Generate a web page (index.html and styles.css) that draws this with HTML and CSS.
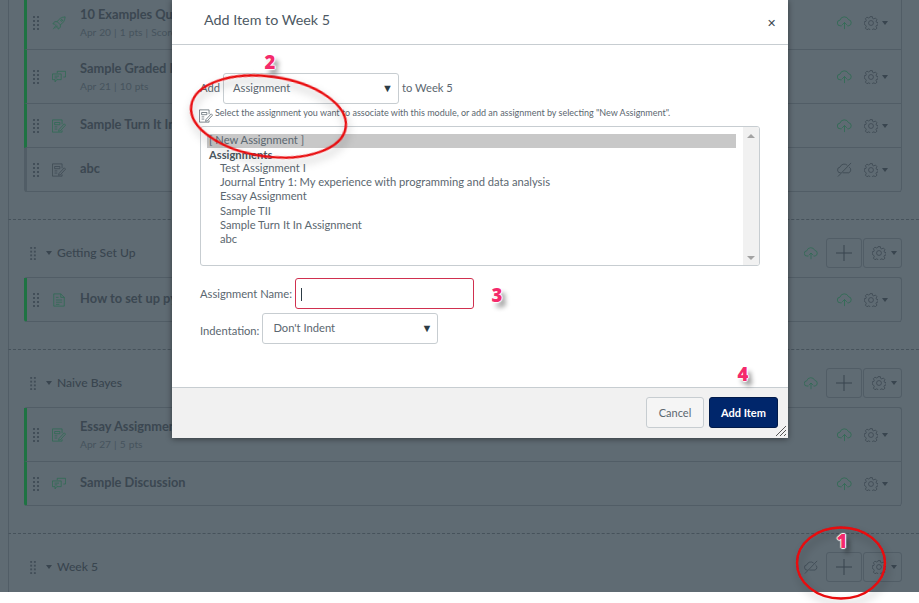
FILE: index.html
```html
<!DOCTYPE html>
<html lang="en">
<head>
<meta charset="utf-8">
<title>Add Item to Week 5</title>
<link rel="stylesheet" href="styles.css">
</head>
<body>
<svg class="defs" width="0" height="0" aria-hidden="true">
  <symbol id="i-handle" viewBox="0 0 6 14"><g fill="currentColor"><rect x="0" y="0" width="2" height="2"/><rect x="4" y="0" width="2" height="2"/><rect x="0" y="4" width="2" height="2"/><rect x="4" y="4" width="2" height="2"/><rect x="0" y="8" width="2" height="2"/><rect x="4" y="8" width="2" height="2"/><rect x="0" y="12" width="2" height="2"/><rect x="4" y="12" width="2" height="2"/></g></symbol>
  <symbol id="i-rocket" viewBox="0 0 16 16"><g fill="none" stroke="currentColor" stroke-width=".8"><path d="M15 1c-4 .3-7 2-9 5.500l3.500 3.500C13 8 14.700 5 15 1z"/><path d="M6 6.500H3L1 9l3 .5M9.500 10v3L7 15l-.5-3"/><path d="M5 10l-3.500 5M6 11l-2 3"/><circle cx="11" cy="5" r="1"/></g></symbol>
  <symbol id="i-discuss" viewBox="0 0 16 16"><g fill="none" stroke="currentColor" stroke-width=".8"><path d="M6 3.500V1.500h9.500V8H13"/><path d="M.5 4.500h10V11H5.500L3.500 13.500V11H.5z"/><path d="M3 7h5M3 9h3"/></g></symbol>
  <symbol id="i-assign" viewBox="0 0 16 16"><g fill="none" stroke="currentColor" stroke-width=".8"><path d="M11.500 6V1H.5v14h11v-2"/><path d="M3 4h6v2.500H3zM3 9h3M3 11.500h3"/><path d="M8 12l-.5 2 2-.5 6-6.500-1.500-1.500z"/></g></symbol>
  <symbol id="i-page" viewBox="0 0 14 16"><g fill="none" stroke="currentColor" stroke-width=".8"><path d="M1 1h8l4 4v10H1z"/><path d="M9 1v4h4M3.500 5h3M3.500 8h7M3.500 10.500h7M3.500 13h4"/></g></symbol>
  <symbol id="i-cloud" viewBox="0 0 16 16"><g fill="none" stroke="currentColor" stroke-width=".8"><path d="M5 11.500H3.500a3 3 0 0 1-.3-6A4.800 4.800 0 0 1 12.300 5a3.300 3.300 0 0 1 .2 6.500H11"/><path d="M8 15V8M5.500 10.500 8 8l2.500 2.500"/></g></symbol>
  <symbol id="i-cloudoff" viewBox="0 0 16 16"><g fill="none" stroke="currentColor" stroke-width=".8"><path d="M4 11.500a3 3 0 0 1-.8-6A4.800 4.800 0 0 1 11 3.500M13 5.500a3.300 3.300 0 0 1-.5 6H6"/><path d="M1 15.500 15 1"/></g></symbol>
  <symbol id="i-gear" viewBox="0 0 16 16"><g fill="none" stroke="currentColor" stroke-width=".8"><path d="M6.700 1h2.600l.4 2 1.300.6 1.800-1 1.800 1.900-1 1.700.5 1.300 1.900.5v2.600l-1.900.5-.5 1.300 1 1.700-1.800 1.900-1.800-1-1.300.5-.4 1.500H6.700l-.4-1.500-1.300-.5-1.800 1-1.800-1.900 1-1.700-.5-1.300L0 9.600V7l1.900-.5.5-1.300-1-1.700 1.800-1.900 1.800 1 1.300-.6z" transform="translate(.2 -.3)"/><circle cx="8" cy="8" r="2.800"/></g></symbol>
  <symbol id="i-plus" viewBox="0 0 16 16"><path d="M8 0v16M0 8h16" fill="none" stroke="currentColor" stroke-width="1"/></symbol>
</svg>

<main class="page">
  <section class="module module-first">
    <ul class="items">
      <li class="item tall pub"><svg class="handle"><use href="#i-handle"/></svg><svg class="type"><use href="#i-rocket"/></svg><div class="body"><div class="name">10 Examples Quiz</div><div class="meta">Apr 20 | 1 pts | Score at least 8</div></div><svg class="cloud on"><use href="#i-cloud"/></svg><svg class="gear"><use href="#i-gear"/></svg><span class="caret"></span></li>
      <li class="item tall pub"><svg class="handle"><use href="#i-handle"/></svg><svg class="type"><use href="#i-discuss"/></svg><div class="body"><div class="name">Sample Graded Discussion</div><div class="meta">Apr 21 | 10 pts</div></div><svg class="cloud on"><use href="#i-cloud"/></svg><svg class="gear"><use href="#i-gear"/></svg><span class="caret"></span></li>
      <li class="item pub"><svg class="handle"><use href="#i-handle"/></svg><svg class="type"><use href="#i-assign"/></svg><div class="body"><div class="name">Sample Turn It In Assignment</div></div><svg class="cloud on"><use href="#i-cloud"/></svg><svg class="gear"><use href="#i-gear"/></svg><span class="caret"></span></li>
      <li class="item"><svg class="handle"><use href="#i-handle"/></svg><svg class="type plain"><use href="#i-assign"/></svg><div class="body"><div class="name">abc</div></div><svg class="cloud"><use href="#i-cloudoff"/></svg><svg class="gear"><use href="#i-gear"/></svg><span class="caret"></span></li>
    </ul>
  </section>

  <section class="module">
    <header class="mod-head"><svg class="mod-handle"><use href="#i-handle"/></svg><span class="mod-caret"></span><h2 class="mod-title">Getting Set Up</h2><svg class="mod-cloud on"><use href="#i-cloud"/></svg><span class="mod-btn add"><svg class="plus"><use href="#i-plus"/></svg></span><span class="mod-btn cog"><svg class="gear"><use href="#i-gear"/></svg><span class="caret"></span></span></header>
    <ul class="items">
      <li class="item pub"><svg class="handle"><use href="#i-handle"/></svg><svg class="type"><use href="#i-page"/></svg><div class="body"><div class="name">How to set up python</div></div><svg class="cloud on"><use href="#i-cloud"/></svg><svg class="gear"><use href="#i-gear"/></svg><span class="caret"></span></li>
    </ul>
  </section>

  <section class="module">
    <header class="mod-head"><svg class="mod-handle"><use href="#i-handle"/></svg><span class="mod-caret"></span><h2 class="mod-title">Naive Bayes</h2><svg class="mod-cloud on"><use href="#i-cloud"/></svg><span class="mod-btn add"><svg class="plus"><use href="#i-plus"/></svg></span><span class="mod-btn cog"><svg class="gear"><use href="#i-gear"/></svg><span class="caret"></span></span></header>
    <ul class="items">
      <li class="item tall pub"><svg class="handle"><use href="#i-handle"/></svg><svg class="type"><use href="#i-assign"/></svg><div class="body"><div class="name">Essay Assignment</div><div class="meta">Apr 27 | 5 pts</div></div><svg class="cloud on"><use href="#i-cloud"/></svg><svg class="gear"><use href="#i-gear"/></svg><span class="caret"></span></li>
      <li class="item pub"><svg class="handle"><use href="#i-handle"/></svg><svg class="type"><use href="#i-discuss"/></svg><div class="body"><div class="name">Sample Discussion</div></div><svg class="cloud on"><use href="#i-cloud"/></svg><svg class="gear"><use href="#i-gear"/></svg><span class="caret"></span></li>
    </ul>
  </section>

  <section class="module module-last">
    <header class="mod-head"><svg class="mod-handle"><use href="#i-handle"/></svg><span class="mod-caret"></span><h2 class="mod-title">Week 5</h2><svg class="mod-cloud"><use href="#i-cloudoff"/></svg><span class="mod-btn add"><svg class="plus"><use href="#i-plus"/></svg></span><span class="mod-btn cog"><svg class="gear"><use href="#i-gear"/></svg><span class="caret"></span></span></header>
  </section>
</main>

<div class="dialog" role="dialog">
  <header class="dlg-head"><h1 class="dlg-title">Add Item to Week 5</h1><span class="dlg-close">&#x2715;</span></header>
  <div class="dlg-body">
    <div class="add-row"><span class="lbl">Add</span><div class="select sel-type"><span>Assignment</span><i class="sel-arrow">&#9660;</i></div><span class="lbl to">to Week 5</span></div>
    <div class="help"><svg class="help-icon"><use href="#i-assign"/></svg><span class="help-text">Select the assignment you want to associate with this module, or add an assignment by selecting "New Assignment".</span></div>
    <div class="listbox">
      <div class="options">
        <div class="opt selected">[ New Assignment ]</div>
        <div class="opt group">Assignments</div>
        <div class="opt child">Test Assignment I</div>
        <div class="opt child">Journal Entry 1: My experience with programming and data analysis</div>
        <div class="opt child">Essay Assignment</div>
        <div class="opt child">Sample TII</div>
        <div class="opt child">Sample Turn It In Assignment</div>
        <div class="opt child">abc</div>
      </div>
      <div class="scrollbar"><i class="sb-up"></i><i class="sb-down"></i></div>
    </div>
    <div class="name-row"><span class="lbl">Assignment Name:</span><div class="text-input"><i class="cursor"></i></div></div>
    <div class="indent-row"><span class="lbl">Indentation:</span><div class="select sel-indent"><span>Don't Indent</span><i class="sel-arrow">&#9660;</i></div></div>
  </div>
  <footer class="dlg-foot"><span class="btn">Cancel</span><span class="btn primary">Add Item</span><svg class="grip" viewBox="0 0 12 12"><path d="M1 11 11 1M5 11 11 5M9 11l2-2" stroke="#555" fill="none"/></svg></footer>
</div>

<svg class="rings" viewBox="0 0 919 603" aria-hidden="true">
  <defs><filter id="ring-shadow" x="-20%" y="-20%" width="140%" height="150%"><feDropShadow dx="2" dy="5" stdDeviation="4" flood-color="#000" flood-opacity=".3"/></filter></defs>
  <ellipse class="ring" cx="268.500" cy="116.500" rx="78" ry="40" transform="rotate(8 268.500 116.500)" filter="url(#ring-shadow)"/>
  <ellipse class="ring" cx="841" cy="563" rx="44" ry="35.500" filter="url(#ring-shadow)"/>
</svg>
<span class="mark m1">1</span>
<span class="mark m2">2</span>
<span class="mark m3">3</span>
<span class="mark m4">4</span>
</body>
</html>
```

FILE: styles.css
```css
* { box-sizing: border-box; }
html, body { margin: 0; padding: 0; }
body { width: 919px; height: 603px; background: #fff; overflow: hidden; position: relative; font-family: Lato, "Open Sans", sans-serif; color: #5b6770; }
.defs { position: absolute; }
svg { display: block; }

.page { height: 592px; overflow: hidden; background: #5f6b73; color: #39454f; margin-left: 0; padding-left: 8px; }
.page > .module { border-left: 1px solid #515d66; }
.module { border-bottom: 1px dashed #46525b; padding: 0 17px 27px 15px; }
.module-first { margin-top: -5px; }
.module-last { border-bottom: 0; padding-bottom: 40px; }

.items { list-style: none; margin: 0; padding: 0; border: 1px solid #515d66; border-bottom: 0; border-left: 0; border-radius: 3px 3px 4px 4px; }
.item { height: 44px; display: flex; align-items: center; border-bottom: 1px solid #515d66; border-left: 3px solid #515d66; padding-left: 6px; }
.item.tall { height: 54px; }
.item.pub { border-left-color: #1f7343; }
.item:last-child { border-bottom-left-radius: 3px; }
.handle { width: 6px; height: 14px; color: #424e58; flex: none; }
.type { width: 14px; height: 14px; margin-left: 13px; color: #2a6c50; flex: none; }
.type.plain { color: #39454f; }
.body { flex: 1; margin-left: 14px; min-width: 0; }
.name { font-size: 12.800px; font-weight: 700; line-height: 17px; color: #3b4751; white-space: nowrap; }
.item:not(.tall) .body { padding-bottom: 2px; }
.meta { font-size: 10.200px; line-height: 14px; margin-top: 2px; color: #46535d; white-space: nowrap; word-spacing: .5px; }
.cloud { width: 15px; height: 15px; flex: none; margin-right: 12px; color: #39454f; }
.cloud.on { color: #2a6c50; }
.gear { width: 14px; height: 14px; flex: none; color: #39454f; }
.caret { flex: none; width: 0; height: 0; margin: 0 13px 0 4px; border: 3px solid transparent; border-top: 4px solid #39454f; border-bottom: 0; }

.mod-head { height: 57px; padding-top: 9px; display: flex; align-items: center; margin-left: 6px; margin-right: 0; }
.mod-handle { width: 6px; height: 13px; color: #424e58; flex: none; }
.mod-caret { flex: none; width: 0; height: 0; margin-left: 10px; border: 3px solid transparent; border-top: 4px solid #39454f; border-bottom: 0; }
.mod-title { flex: 1; margin: 0 0 0 5px; padding-bottom: 2px; font-size: 12.100px; font-weight: 500; color: #39454f; }
.mod-cloud { width: 14px; height: 14px; flex: none; margin-right: 8px; color: #39454f; }
.mod-cloud.on { color: #2a6c50; }
.mod-btn { height: 30px; flex: none; display: flex; align-items: center; justify-content: center; border: 1px solid #515d66; border-radius: 3px; }
.mod-btn.add { width: 36px; margin-right: 1px; }
.mod-btn.cog { width: 39px; padding-left: 4px; }
.mod-btn .caret { margin: 0 0 0 5px; }
.plus { width: 16px; height: 16px; color: #39454f; }

.dialog { position: absolute; left: 172px; top: 0; width: 616px; height: 438px; background: #fff; display: flex; flex-direction: column; box-shadow: 0 1px 6px rgba(0,0,0,.45); }
.dlg-head { height: 45px; flex: none; display: flex; align-items: center; justify-content: space-between; border-bottom: 1px solid #c7cdd1; padding: 0 12px 5px 32px; }
.dlg-title { margin: 0; font-size: 14.300px; font-weight: 400; color: #4d5963; }
.dlg-close { font-size: 11px; font-weight: 400; color: #3d4952; margin-top: 6px; }
.dlg-body { flex: 1; padding: 28px 28px 0; font-size: 11px; position: relative; }
.lbl { font-size: 11.200px; color: #5b6770; white-space: nowrap; }
.add-row { display: flex; align-items: center; height: 31px; }
.add-row .lbl { padding-bottom: 3px; }
.indent-row .lbl { padding-top: 4px; }
.to { margin-left: 3px; }
.select { height: 31px; border: 1px solid #c7cdd1; border-radius: 3px; display: flex; align-items: center; justify-content: space-between; padding: 0 5px 2px 9px; background: #fff; font-size: 11.200px; color: #5b6770; }
.sel-type { width: 176px; margin-left: 3px; }
.sel-indent { width: 176px; margin-left: 3px; padding-left: 10px; }
.sel-arrow { font-style: normal; font-size: 11px; color: #2d3b45; }
.help { display: flex; align-items: flex-start; height: 15px; margin-top: 5px; margin-left: -1px; white-space: nowrap; }
.help-text { font-size: 9px; line-height: 8px; color: #5b6770; }
.help-icon { width: 14px; height: 14px; margin-right: 2px; color: #4b5760; }
.listbox { width: 560px; height: 140px; margin-top: 2px; border: 1px solid #c7cdd1; border-radius: 3px; display: flex; overflow: hidden; }
.options { flex: 1; padding: 7px 7px 0 6px; font-size: 11.200px; color: #5b6770; }
.opt { height: 14px; line-height: 12px; white-space: nowrap; }
.opt.selected { background: #c8c8c8; padding-left: 2px; }
.opt.group { font-weight: 700; line-height: 14px; color: #4b5760; padding-left: 2px; }
.opt.child { height: 14.200px; padding-left: 13px; }
.scrollbar { width: 16px; flex: none; background: #f1f1f1; display: flex; flex-direction: column; justify-content: space-between; align-items: center; padding: 7px 0 5px; }
.sb-up, .sb-down { width: 0; height: 0; border: 4px solid transparent; }
.sb-up { border-bottom: 4px solid #a3a3a3; border-top: 0; }
.sb-down { border-top: 4px solid #a3a3a3; border-bottom: 0; }
.name-row { display: flex; align-items: center; margin-top: 12px; height: 31px; }
.text-input { width: 179px; height: 31px; margin-left: 3px; border: 1px solid #d0304f; border-radius: 3px; padding: 9px 5px; }
.cursor { display: block; width: 1px; height: 13px; background: #2d3b45; }
.indent-row { display: flex; align-items: center; margin-top: 4px; height: 31px; }
.dlg-foot { height: 51px; flex: none; position: relative; background: #f1f1f1; border-top: 1px solid #c7cdd1; display: flex; justify-content: flex-end; align-items: flex-start; gap: 5px; padding: 9px 10px 0 0; }
.btn { height: 31px; width: 58px; display: flex; align-items: center; justify-content: center; border: 1px solid #c7cdd1; border-radius: 3px; background: #f5f5f5; font-size: 11px; color: #5b6770; }
.btn.primary { width: 69px; background: #00266b; border-color: #001a4a; color: #fff; font-weight: 700; }
.grip { position: absolute; right: 1px; bottom: 1px; width: 12px; height: 12px; }

.rings { position: absolute; left: 0; top: 0; width: 919px; height: 603px; pointer-events: none; }
.ring { fill: none; stroke: #e8080e; stroke-width: 2.400; }
.mark { position: absolute; width: 20px; text-align: center; font-family: "Open Sans", Lato, sans-serif; font-size: 18.500px; font-weight: 800; line-height: 20px; color: #f42a6b; text-shadow: 1px 0 1px #fff, -1px 0 1px #fff, 0 1px 1px #fff, 0 -1px 1px #fff, 4px 5px 5px rgba(0,0,0,.45); }
.m1 { left: 832px; top: 531px; }
.m2 { left: 260px; top: 52px; }
.m3 { left: 487px; top: 285px; }
.m4 { left: 733px; top: 364px; }
```
